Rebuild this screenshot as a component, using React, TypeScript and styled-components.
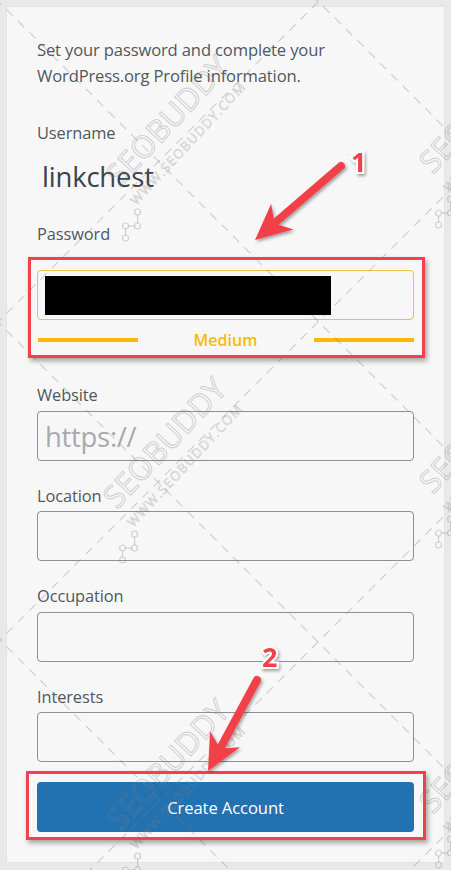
import React from "react";
import styled, { createGlobalStyle } from "styled-components";

const Global = createGlobalStyle`
  html, body { margin: 0; padding: 0; }
  body {
    background: #e9e9e9;
    font-family: "Open Sans", "Noto Sans", sans-serif;
    color: #50575e;
  }
  * { box-sizing: border-box; }
`;

const Page = styled.div`
  position: relative;
  width: 451px;
  height: 870px;
  padding: 7px 7px 8px 7px;
  overflow: hidden;
`;

const Card = styled.div`
  background: #f7f7f7;
  height: 855px;
  padding: 30px 30px 30px 30px;
  display: flex;
  flex-direction: column;
  box-shadow: 0 0 1px rgba(0, 0, 0, 0.12);
`;

const Intro = styled.p`
  margin: 0;
  font-size: 16.6px;
  line-height: 26px;
  color: #50575e;
  letter-spacing: -0.15px;
`;

const Label = styled.div<{ $top: number }>`
  margin-top: ${(p) => p.$top}px;
  font-size: 16.4px;
  line-height: 24px;
  color: #50575e;
  letter-spacing: -0.1px;
`;

const UserName = styled.div`
  margin-top: 16px;
  padding-left: 5px;
  font-size: 27.5px;
  line-height: 32px;
  color: #3c434a;
  letter-spacing: -0.2px;
`;

const Field = styled.div<{ $top: number }>`
  position: relative;
  margin-top: ${(p) => p.$top}px;
`;

const Input = styled.div<{ $strong?: boolean }>`
  height: 50px;
  border: 1px solid ${(p) => (p.$strong ? "#f0c33c" : "#8c8f94")};
  border-radius: 4px;
  background: #f7f7f7;
  display: flex;
  align-items: center;
  padding: 0 7px;
`;

const Redacted = styled.div`
  position: relative;
  z-index: 1;
  width: 286px;
  height: 39px;
  background: #000;
`;

const Placeholder = styled.span`
  font-size: 27.5px;
  color: #a7aaad;
  letter-spacing: -0.3px;
`;

const Strength = styled.div`
  margin-top: 10px;
  height: 20px;
  display: flex;
  align-items: center;
  justify-content: space-between;
`;

const Bar = styled.div`
  width: 100px;
  height: 4px;
  background: #ffb900;
  margin-left: 1px;
`;

const StrengthText = styled.span`
  font-size: 16px;
  font-weight: 600;
  color: #ffb900;
`;

const Callout = styled.div<{ $t: number; $l: number; $r: number; $b: number }>`
  position: absolute;
  z-index: 2;
  top: ${(p) => p.$t}px;
  left: ${(p) => p.$l}px;
  right: ${(p) => p.$r}px;
  bottom: ${(p) => p.$b}px;
  border: 3px solid #f2414a;
  box-shadow: 2px 3px 5px rgba(0, 0, 0, 0.35);
  pointer-events: none;
`;

const Button = styled.button`
  width: 100%;
  height: 50px;
  border: none;
  border-radius: 4px;
  background: #2271b1;
  color: #fff;
  font-family: "Open Sans", "Noto Sans", sans-serif;
  font-size: 16.6px;
  letter-spacing: -0.1px;
  display: block;
`;

const Overlay = styled.svg`
  position: absolute;
  left: 0;
  top: 0;
  width: 451px;
  height: 870px;
  pointer-events: none;
`;

const ArrowLayer = styled(Overlay)`
  z-index: 3;
`;

const downRight = [-317, 3, 324, 640];
const upRight = [320, 640, 960, 1280];
const marks: [number, number][] = [
  [120, 188],
  [117, 510],
  [120, 832],
  [433, 175],
  [433, 495],
  [433, 815],
];

const WM = "rgba(128,128,128,0.32)";

function Watermark() {
  return (
    <g>
      {downRight.map((d) => (
        <line
          key={"d" + d}
          x1={-50}
          y1={-50 + d}
          x2={951}
          y2={951 + d}
          stroke={WM}
          strokeWidth={1.2}
          strokeDasharray="9 7"
        />
      ))}
      {upRight.map((c) => (
        <line
          key={"u" + c}
          x1={-50}
          y1={c + 50}
          x2={c + 50}
          y2={-50}
          stroke={WM}
          strokeWidth={1.2}
          strokeDasharray="9 7"
        />
      ))}
      {marks.map(([x, y]) => (
        <g key={x + "-" + y} transform={`translate(${x} ${y}) rotate(-47)`}>
          <text
            x={0}
            y={0}
            fontFamily="'Open Sans', sans-serif"
            fontSize={31}
            fill="none"
            stroke={WM}
            strokeWidth={1.1}
          >
            SEOBUDDY
          </text>
          <text
            x={-2}
            y={24}
            fontFamily="'Open Sans', sans-serif"
            fontSize={13}
            fill="none"
            stroke={WM}
            strokeWidth={0.7}
            letterSpacing={1.3}
          >
            WWW.SEOBUDDY.COM
          </text>
          <g transform="translate(-24 30) rotate(47)" stroke={WM} fill="none" strokeWidth={1.2}>
            <circle cx={0} cy={0} r={3} />
            <circle cx={12} cy={0} r={3} />
            <circle cx={12} cy={-14} r={3} />
            <circle cx={0} cy={12} r={3} />
            <line x1={3} y1={0} x2={9} y2={0} />
            <line x1={12} y1={-3} x2={12} y2={-11} />
            <line x1={0} y1={3} x2={0} y2={9} />
          </g>
        </g>
      ))}
    </g>
  );
}

function Arrow({ x1, y1, x2, y2 }: { x1: number; y1: number; x2: number; y2: number }) {
  const ang = Math.atan2(y2 - y1, x2 - x1);
  const headLen = 36;
  const headW = 17;
  const bx = x2 - headLen * Math.cos(ang);
  const by = y2 - headLen * Math.sin(ang);
  const px = -Math.sin(ang);
  const py = Math.cos(ang);
  const nx = bx + (x2 - bx) * 0.22;
  const ny = by + (y2 - by) * 0.22;
  const pts = `${x2},${y2} ${bx + px * headW},${by + py * headW} ${nx + px * 4},${ny + py * 4} ${nx - px * 4},${ny - py * 4} ${bx - px * headW},${by - py * headW}`;
  return (
    <g filter="url(#shadow)">
      <line
        x1={x1}
        y1={y1}
        x2={bx + (x2 - bx) * 0.3}
        y2={by + (y2 - by) * 0.3}
        stroke="#f2414a"
        strokeWidth={8}
        strokeLinecap="round"
      />
      <polygon points={pts} fill="#f2414a" />
    </g>
  );
}

function Num({ x, y, children }: { x: number; y: number; children: string }) {
  return (
    <text
      x={x}
      y={y}
      fontFamily="'Open Sans', sans-serif"
      fontWeight={700}
      fontSize={27}
      fill="#f2414a"
      stroke="#ffffff"
      strokeWidth={4}
      paintOrder="stroke"
      filter="url(#shadow)"
    >
      {children}
    </text>
  );
}

export default function App() {
  return (
    <>
      <Global />
      <Page>
        <Card>
          <Intro>
            Set your password and complete your
            <br />
            WordPress.org Profile information.
          </Intro>
          <Label $top={32}>Username</Label>
          <UserName>linkchest</UserName>
          <Label $top={29}>Password</Label>
          <Field $top={24}>
            <Input $strong>
              <Redacted />
            </Input>
            <Strength>
              <Bar />
              <StrengthText>Medium</StrengthText>
              <Bar />
            </Strength>
            <Callout $t={-13} $l={-9} $r={-11} $b={-8} />
          </Field>
          <Label $top={33}>Website</Label>
          <Field $top={4}>
            <Input>
              <Placeholder>https://</Placeholder>
            </Input>
          </Field>
          <Label $top={23}>Location</Label>
          <Field $top={3}>
            <Input />
          </Field>
          <Label $top={23}>Occupation</Label>
          <Field $top={4}>
            <Input />
          </Field>
          <Label $top={23}>Interests</Label>
          <Field $top={3}>
            <Input />
          </Field>
          <Field $top={20}>
            <Button>Create Account</Button>
            <Callout $t={-11} $l={-11} $r={-12} $b={-8} />
          </Field>
        </Card>
        <Overlay viewBox="0 0 451 870">
          <Watermark />
        </Overlay>
        <ArrowLayer viewBox="0 0 451 870">
          <defs>
            <filter id="shadow" x="-30%" y="-30%" width="160%" height="160%">
              <feDropShadow dx="1.5" dy="2" stdDeviation="1.8" floodColor="#000" floodOpacity="0.35" />
            </filter>
          </defs>
          <Arrow x1={341} y1={166} x2={255} y2={240} />
          <Num x={351} y={172}>1</Num>
          <Arrow x1={257} y1={680} x2={208} y2={771} />
          <Num x={262} y={667}>2</Num>
        </ArrowLayer>
      </Page>
    </>
  );
}
